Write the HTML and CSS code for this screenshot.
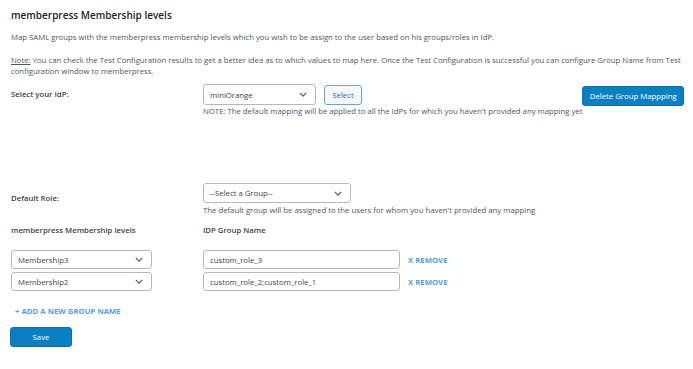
FILE: index.html
```html
<!DOCTYPE html>
<html>
<head>
<meta charset="utf-8">
<link rel="stylesheet" href="styles.css">
</head>
<body>
<div class="page">
  <h2 class="title">memberpress Membership levels</h2>
  <p class="intro">Map SAML groups with the memberpress membership levels which you wish to be assign to the user based on his groups/roles in IdP.</p>
  <p class="note"><span class="ul">Note:</span> You can check the Test Configuration results to get a better idea as to which values to map here. Once the Test Configuration is successful you can configure Group Name from Test configuration window to memberpress.</p>

  <div class="row idp-row">
    <div class="label">Select your IdP:</div>
    <div class="field">
      <div class="inline">
        <div class="select sel-idp"><span>miniOrange</span><svg class="chev" viewBox="0 0 10 6"><path d="M1 1l4 4 4-4" fill="none" stroke="#555" stroke-width="1.4"/></svg></div>
        <button class="btn-secondary">Select</button>
      </div>
      <div class="hint">NOTE: The default mapping will be applied to all the IdPs for which you haven't provided any mapping yet</div>
    </div>
    <button class="btn-primary btn-delete">Delete Group Mappping</button>
  </div>

  <div class="row role-row">
    <div class="label label-role">Default Role:</div>
    <div class="field">
      <div class="select sel-role"><span>--Select a Group--</span><svg class="chev" viewBox="0 0 10 6"><path d="M1 1l4 4 4-4" fill="none" stroke="#555" stroke-width="1.4"/></svg></div>
      <div class="hint hint-role">The default group will be assigned to the users for whom you haven't provided any mapping</div>
    </div>
  </div>

  <div class="row head-row">
    <div class="label">memberpress Membership levels</div>
    <div class="label bold">IDP Group Name</div>
  </div>

  <div class="map-row">
    <div class="select sel-level"><span>Membership3</span><svg class="chev" viewBox="0 0 10 6"><path d="M1 1l4 4 4-4" fill="none" stroke="#555" stroke-width="1.4"/></svg></div>
    <div class="input">custom_role_3</div>
    <a class="remove">X REMOVE</a>
  </div>
  <div class="map-row">
    <div class="select sel-level"><span>Membership2</span><svg class="chev" viewBox="0 0 10 6"><path d="M1 1l4 4 4-4" fill="none" stroke="#555" stroke-width="1.4"/></svg></div>
    <div class="input">custom_role_2;custom_role_1</div>
    <a class="remove">X REMOVE</a>
  </div>

  <a class="add">+ ADD A NEW GROUP NAME</a>
  <button class="btn-primary btn-save">Save</button>
</div>
</body>
</html>
```

FILE: styles.css
```css
* { box-sizing: border-box; }
html, body { margin: 0; padding: 0; background: #fff; }
body {
  font-family: "Open Sans", "Noto Sans", sans-serif;
  font-size: 7.75px;
  color: #50575e;
}
.page { padding: 0 9px 0 11px; width: 693px; }
.title {
  margin: 0;
  padding-top: 7px;
  font-size: 10px;
  font-weight: 600;
  color: #1d2327;
  line-height: 16px;
}
.intro { margin: 9px 0 0; line-height: 11px; }
.note { margin: 12px 0 0; line-height: 11px; }
.ul { text-decoration: underline; }
.row { display: flex; align-items: flex-start; }
.label { width: 192px; flex: none; font-weight: 600; color: #3c434a; }
.label.bold { width: auto; }
.idp-row { margin-top: 7px; }
.idp-row .label { padding-top: 5px; }
.field { display: flex; flex-direction: column; }
.inline { display: flex; gap: 8px; align-items: center; }
.select {
  display: flex; align-items: center; justify-content: space-between;
  border: 1px solid #b4b9be;
  border-radius: 3px;
  background: #fff;
  padding: 0 8px 0 6px;
  color: #3c434a;
}
.chev { width: 8px; height: 5px; }
.sel-idp { width: 113px; height: 21px; }
.btn-secondary {
  width: 38px; height: 20px;
  border: 1px solid #6aa5cf;
  border-radius: 3px;
  background: #f6f7f7;
  color: #2271b1;
  font-family: inherit; font-size: 7.75px;
  padding: 0;
}
.hint { margin-top: 1px; line-height: 11px; white-space: nowrap; }
.hint-role { margin-top: 2px; }
.btn-primary {
  background: #0a7fc1;
  border: 1px solid #0a72ae;
  border-radius: 3px;
  color: #fff;
  font-family: inherit;
  font-size: 7.75px;
  padding: 0;
}
.btn-delete { margin-left: auto; margin-top: 2px; width: 103px; height: 20px; }
.role-row { margin-top: 66px; }
.label-role { padding-top: 10px; }
.sel-role { width: 148px; height: 20px; }
.head-row { margin-top: 9px; }
.map-row { display: flex; align-items: center; margin-top: 3px; }
.head-row + .map-row { margin-top: 15px; }
.sel-level { width: 141px; height: 19px; margin-right: 51px; }
.input {
  width: 197px; height: 19px;
  border: 1px solid #b4b9be;
  border-radius: 3px;
  padding: 0 6px;
  display: flex; align-items: center;
  color: #3c434a;
}
.remove {
  margin-left: 8px;
  color: #5b9dd9;
  font-weight: 700;
}
.add {
  display: block;
  margin: 15px 0 0 4px;
  color: #5b9dd9;
  font-weight: 700;
  line-height: 11px;
}
.btn-save { display: block; margin: 10px 0 0 -1px; width: 62px; height: 20px; }
```
